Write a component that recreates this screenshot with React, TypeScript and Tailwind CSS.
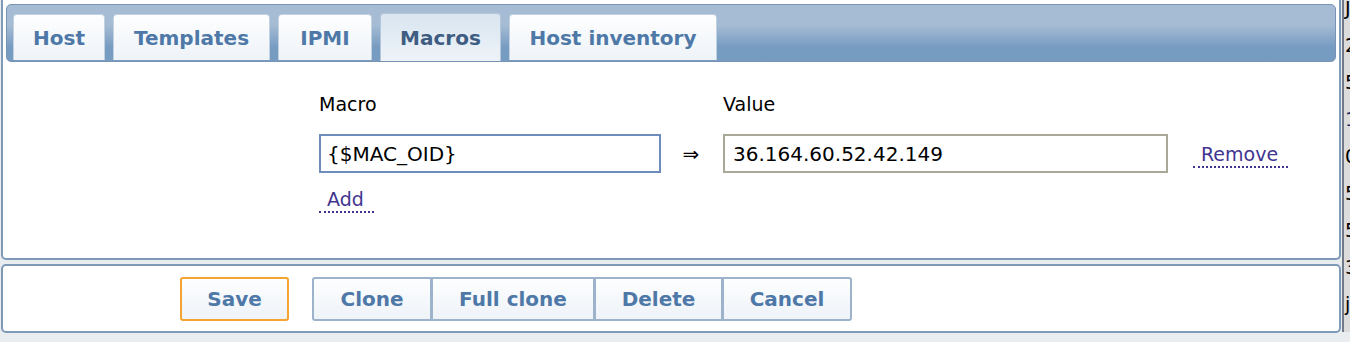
import React from "react";

const font = { fontFamily: '"DejaVu Sans", Verdana, sans-serif' };

function Tab({ label, w, active }: { label: string; w: string; active?: boolean }) {
  return (
    <div
      className={
        "flex items-center justify-center rounded-t-[4px] border border-b-0 text-[20px] font-bold " +
        w +
        " " +
        (active
          ? "h-[48px] border-[#b4c7da] bg-linear-to-b from-[#d9e5f0] to-[#eef3f8] text-[#3e5c82]"
          : "h-[46px] mb-[1px] border-[#c3d2e1] bg-linear-to-b from-[#fdfeff] to-[#eef3f8] text-[#4e78a7]")
      }
    >
      {label}
    </div>
  );
}

function Btn({ label, w, cls }: { label: string; w: string; cls?: string }) {
  return (
    <div
      className={
        "h-[44px] flex items-center justify-center border-2 bg-linear-to-b from-[#fdfeff] to-[#eef3f8] text-[20px] font-bold text-[#4e78a7] " +
        w +
        " " +
        (cls || "")
      }
    >
      {label}
    </div>
  );
}

export default function App() {
  const strip = ["J", "2", "5", "1", "0", "5", "5", "3", "j", "."];
  return (
    <div className="w-[1350px] h-[342px] bg-[#e9edf0] flex overflow-hidden" style={font}>
      <div className="w-[1342px] flex flex-col">
        {/* Main panel */}
        <div className="ml-px w-[1340px] h-[260px] bg-white border-2 border-t-0 border-[#7f9ab8] rounded-b-[5px] flex flex-col">
          <div className="mx-[3px] mt-[4px] h-[58px] rounded-[5px] border border-[#7893b3] bg-linear-to-b from-[#a6bcd4] from-35% to-[#779cc2] to-75% flex items-end gap-[8px] pl-[6px]">
            <Tab label="Host" w="w-[92px]" />
            <Tab label="Templates" w="w-[157px]" />
            <Tab label="IPMI" w="w-[94px]" />
            <Tab label="Macros" w="w-[121px]" active />
            <Tab label="Host inventory" w="w-[208px]" />
          </div>
          <div className="pl-[316px] pt-[30px] text-[19px] text-black">
            <div className="flex h-[24px] leading-[24px]">
              <div className="w-[404px]">Macro</div>
              <div>Value</div>
            </div>
            <div className="flex items-center mt-[18px]">
              <div className="w-[342px] h-[39px] border-2 border-[#6d8dbc] flex items-center pl-[6px] text-[20px]">
                {"{$MAC_OID}"}
              </div>
              <div className="w-[62px] flex justify-center text-[20px] pr-[2px]">⇒</div>
              <div className="w-[445px] h-[39px] border-2 border-[#a9a898] flex items-center pl-[8px] text-[20px]">
                36.164.60.52.42.149
              </div>
              <div className="ml-[25px] mt-[2px] pl-[8px] pr-[10px] leading-[24px] text-[#3f3590] border-b-2 border-dotted border-[#3f3590]">
                Remove
              </div>
            </div>
            <div className="mt-[14px] flex">
              <div className="pl-[8px] pr-[10px] leading-[24px] text-[#3f3590] border-b-2 border-dotted border-[#3f3590]">
                Add
              </div>
            </div>
          </div>
        </div>
        {/* Button panel */}
        <div className="ml-px mt-[4px] w-[1340px] h-[69px] bg-white border-2 border-[#7f9ab8] rounded-[5px] flex items-start pt-[11px] pl-[177px]">
          <Btn label="Save" w="w-[109px]" cls="border-[#f6a431] rounded-[3px]" />
          <div className="flex ml-[23px]">
            <Btn label="Clone" w="w-[120px]" cls="border-[#9db2cb] rounded-l-[3px]" />
            <Btn label="Full clone" w="w-[164px]" cls="border-[#9db2cb] -ml-px" />
            <Btn label="Delete" w="w-[129px]" cls="border-[#9db2cb] -ml-px" />
            <Btn label="Cancel" w="w-[130px]" cls="border-[#9db2cb] -ml-px rounded-r-[3px]" />
          </div>
        </div>
      </div>
      {/* Right strip */}
      <div className="w-[8px] h-[342px] border-l-2 border-[#6f7b88] bg-[#dcdcdc] overflow-hidden flex flex-col text-[19px] leading-[37px] text-black pl-[1px] -mt-[10px]">
        {strip.map((c, i) => (
          <div key={i} className={i === 3 ? "text-[#1a2a6a]" : ""}>
            {c}
          </div>
        ))}
      </div>
    </div>
  );
}
